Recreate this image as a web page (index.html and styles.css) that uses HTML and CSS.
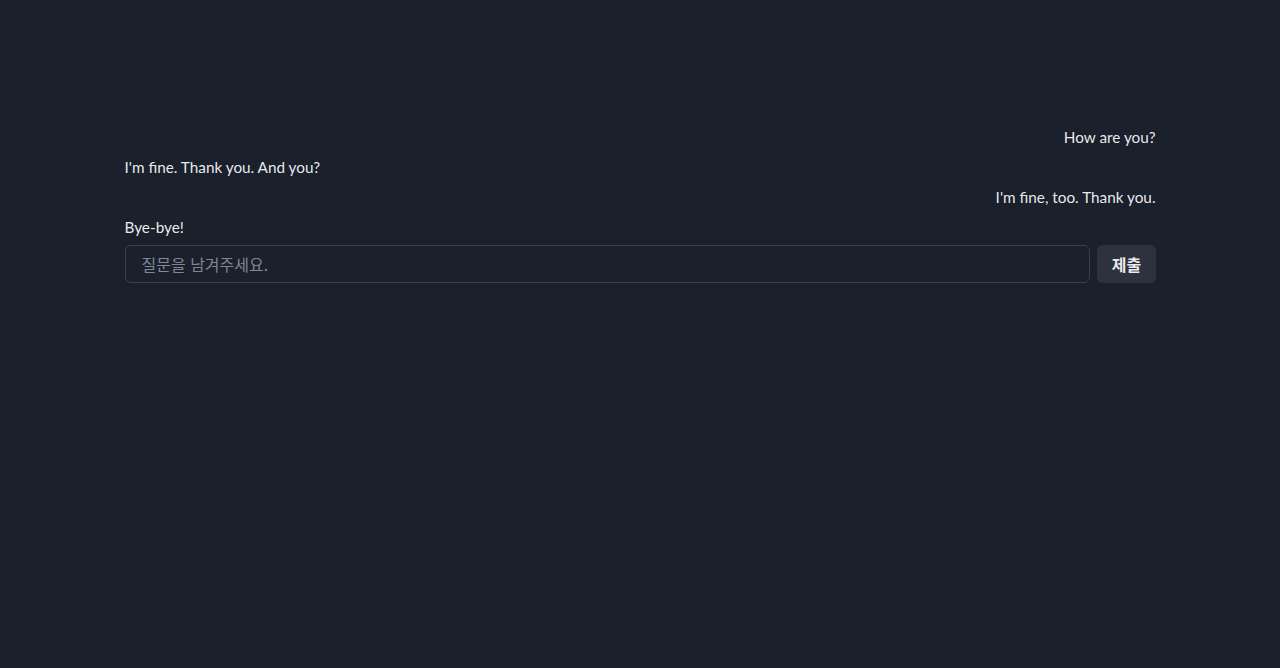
FILE: index.html
```html
<!DOCTYPE html>
<html lang="ko">
<head>
<meta charset="utf-8">
<link rel="stylesheet" href="styles.css">
<title>Chat</title>
</head>
<body>
  <main class="chat">
    <div class="messages">
      <p class="msg mine">How are you?</p>
      <p class="msg theirs">I'm fine. Thank you. And you?</p>
      <p class="msg mine">I'm fine, too. Thank you.</p>
      <p class="msg theirs">Bye-bye!</p>
    </div>
    <form class="composer">
      <input class="composer-input" type="text" placeholder="질문을 남겨주세요.">
      <button class="composer-btn" type="button">제출</button>
    </form>
  </main>
</body>
</html>
```
FILE: styles.css
```css
html, body {
  margin: 0;
  padding: 0;
  background: #1a202c;
  height: 100%;
}
body {
  font-family: "Lato", "Noto Sans CJK KR", sans-serif;
  font-size: 16px;
  color: rgba(255, 255, 255, 0.92);
}
.chat {
  width: 1031px;
  margin: 0 auto;
  padding-top: 125px;
  display: flex;
  flex-direction: column;
  gap: 6px;
}
.messages {
  display: flex;
  flex-direction: column;
  gap: 6px;
}
.msg {
  margin: 0;
  line-height: 24px;
  font-size: 15.3px;
}
.mine { text-align: right; }
.theirs { text-align: left; }
.composer {
  display: flex;
  gap: 7px;
  margin: 0;
}
.composer-input {
  flex: 1;
  height: 38px;
  box-sizing: border-box;
  border: 1px solid #3b414c;
  border-radius: 6px;
  background: transparent;
  padding: 0 16px;
  font-family: "Noto Sans CJK KR", sans-serif;
  font-size: 16px;
  color: rgba(255, 255, 255, 0.92);
  outline: none;
}
.composer-input::placeholder {
  color: #7f8796;
}
.composer-btn {
  width: 59px;
  height: 38px;
  border: none;
  border-radius: 6px;
  background: #2d333e;
  color: rgba(255, 255, 255, 0.92);
  font-family: "Noto Sans CJK KR", sans-serif;
  font-weight: 700;
  font-size: 16px;
  padding: 0 0 0 1px;
}
```
